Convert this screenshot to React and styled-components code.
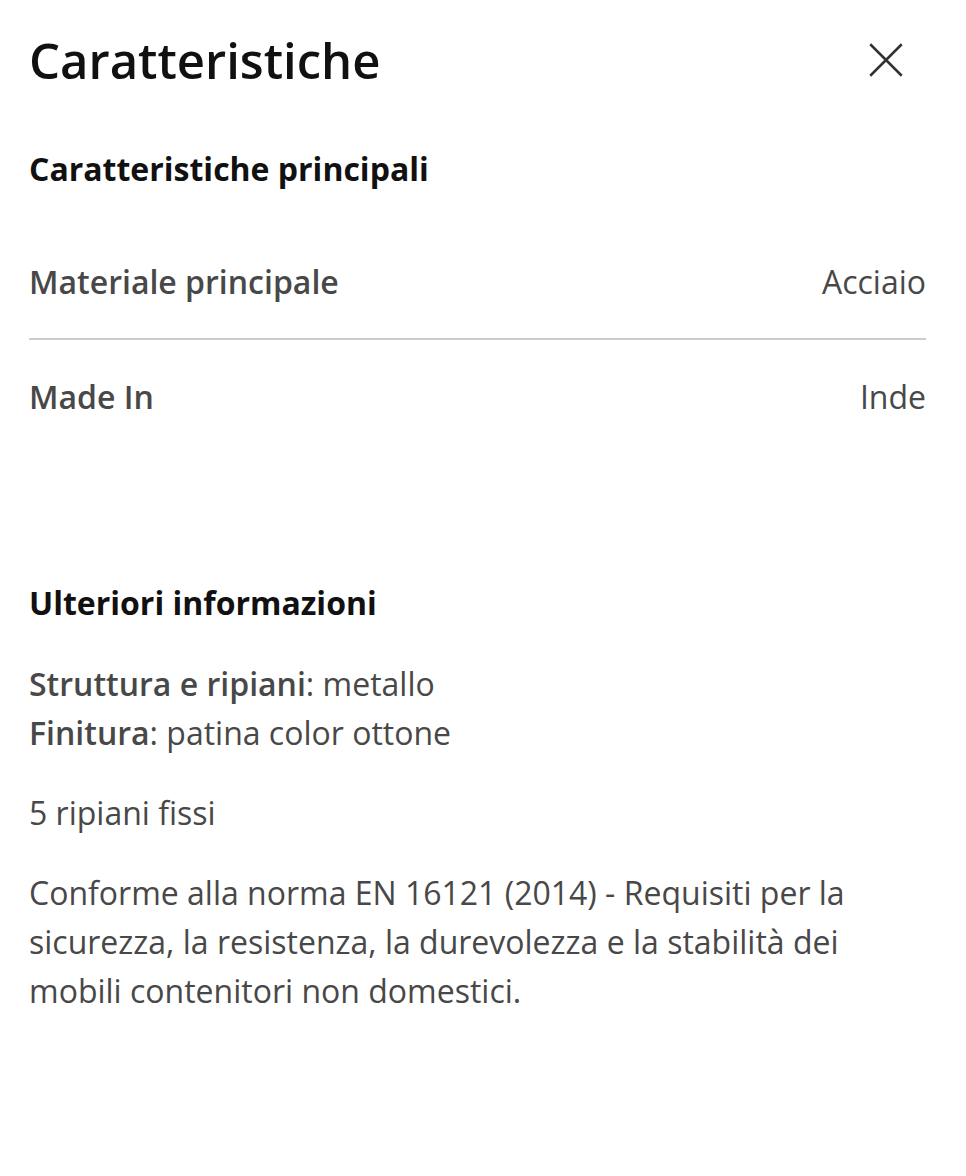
import styled, { createGlobalStyle } from 'styled-components'

const GlobalStyle = createGlobalStyle`
  body {
    margin: 0;
    background: #fff;
    font-family: 'Open Sans', 'Noto Sans', sans-serif;
  }
`
const Panel = styled.div`
  padding: 24px 40px 80px 29px;
`
const Header = styled.header`
  display: flex;
  align-items: center;
  justify-content: space-between;
`
const Title = styled.h1`
  margin: 0;
  font-size: 49px;
  line-height: 72px;
  font-weight: 600;
  color: #111;
`
const Close = styled.button`
  display: flex;
  align-items: center;
  justify-content: center;
  width: 56px;
  height: 56px;
  margin-right: 12px;
  padding: 0;
  border: none;
  background: none;
  color: #333;
`
const Section = styled.section`
  margin-top: ${(props) => props.$top};
`
const SubTitle = styled.h2`
  margin: 0;
  font-size: 32px;
  line-height: 40px;
  font-weight: 700;
  color: #111;
`
const List = styled.dl`
  margin: 36px 0 0;
`
const Row = styled.div`
  display: flex;
  justify-content: space-between;
  align-items: center;
  padding: 32px 0;
  border-bottom: ${(props) => (props.$last ? 'none' : '2px solid #ccc')};
`
const Label = styled.dt`
  font-size: 32px;
  line-height: 49px;
  font-weight: 600;
  color: #484848;
`
const Value = styled.dd`
  margin: 0;
  font-size: 32px;
  line-height: 49px;
  color: #484848;
`
const Text = styled.p`
  margin: ${(props) => props.$top} 0 0;
  font-size: 32px;
  line-height: 49px;
  color: #484848;
`
const Strong = styled.strong`
  font-weight: 600;
`

function App() {
  const features = [
    { id: 1, label: 'Materiale principale', value: 'Acciaio' },
    { id: 2, label: 'Made In', value: 'Inde' }
  ]
  return (
    <Panel>
      <GlobalStyle />
      <Header>
        <Title>Caratteristiche</Title>
        <Close aria-label='Chiudi'>
          <svg width='36' height='36' viewBox='0 0 24 24' fill='none' stroke='currentColor' strokeWidth='1.7'>
            <path d='M1.5 1.5l21 21M22.5 1.5l-21 21' />
          </svg>
        </Close>
      </Header>
      <Section $top='53px'>
        <SubTitle>Caratteristiche principali</SubTitle>
        <List>
          {features.map((item, i) => (
            <Row key={item.id} $last={i === features.length - 1}>
              <Label>{item.label}</Label>
              <Value>{item.value}</Value>
            </Row>
          ))}
        </List>
      </Section>
      <Section $top='130px'>
        <SubTitle>Ulteriori informazioni</SubTitle>
        <Text $top='36px'>
          <Strong>Struttura e ripiani</Strong>: metallo
          <br />
          <Strong>Finitura</Strong>: patina color ottone
        </Text>
        <Text $top='31px'>5 ripiani fissi</Text>
        <Text $top='31px'>
          Conforme alla norma EN 16121 (2014) - Requisiti per la sicurezza, la resistenza, la durevolezza e la stabilità dei mobili contenitori non domestici.
        </Text>
      </Section>
    </Panel>
  )
}

export default App
